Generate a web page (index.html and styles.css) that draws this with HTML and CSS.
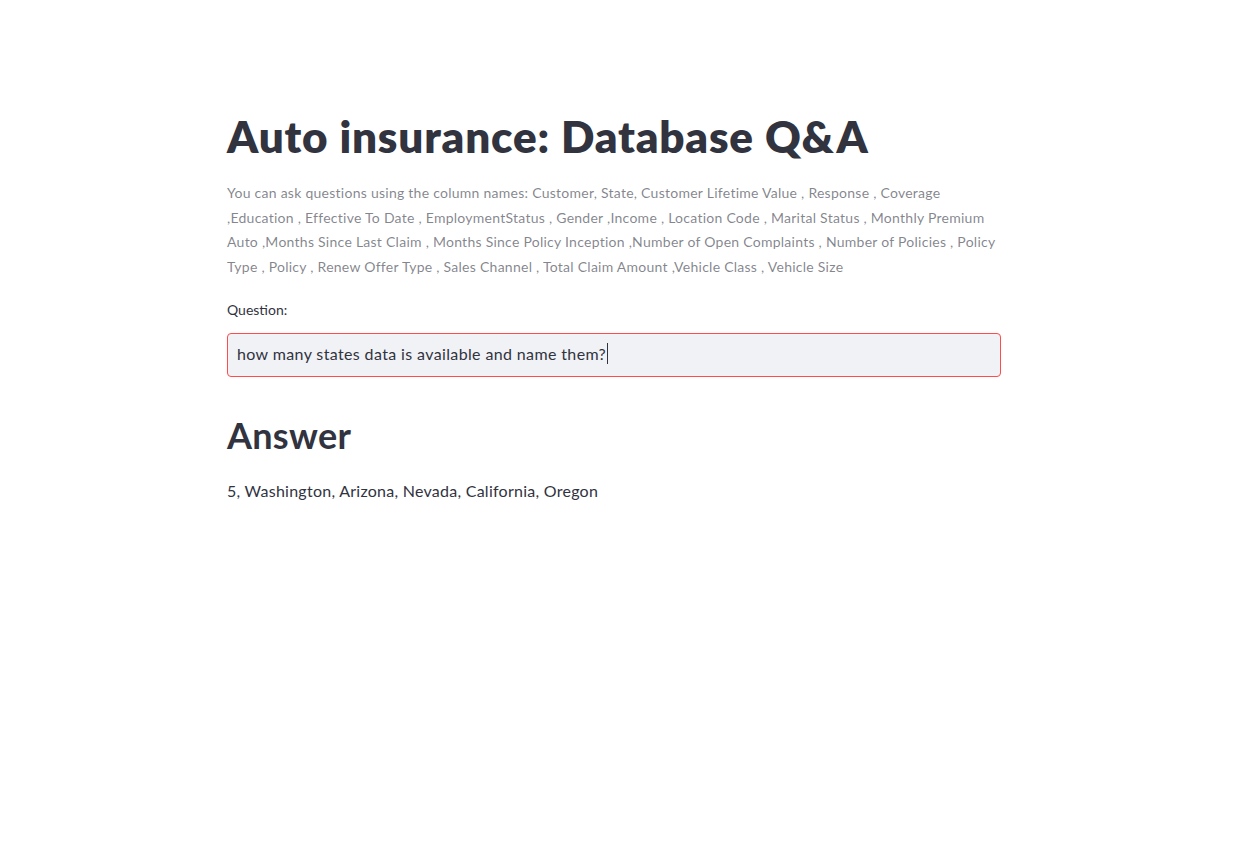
FILE: index.html
```html
<!DOCTYPE html>
<html lang="en">
<head>
<meta charset="utf-8">
<title>Auto insurance: Database Q&amp;A</title>
<link rel="stylesheet" href="styles.css">
</head>
<body>
<main class="app">
  <section class="block">
    <h1 class="title">Auto insurance: Database Q&amp;A</h1>
    <p class="caption">You can ask questions using the column names: Customer, State, Customer Lifetime Value , Response , Coverage<br>,Education , Effective To Date , EmploymentStatus , Gender ,Income , Location Code , Marital Status , Monthly Premium<br>Auto ,Months Since Last Claim , Months Since Policy Inception ,Number of Open Complaints , Number of Policies , Policy<br>Type , Policy , Renew Offer Type , Sales Channel , Total Claim Amount ,Vehicle Class , Vehicle Size</p>
    <div class="field">
      <label class="label">Question:</label>
      <div class="input"><span class="value">how many states data is available and name them?</span><span class="caret"></span></div>
    </div>
    <h2 class="subtitle">Answer</h2>
    <p class="answer">5, Washington, Arizona, Nevada, California, Oregon</p>
  </section>
</main>
</body>
</html>
```
FILE: styles.css
```css
html, body {
  margin: 0;
  padding: 0;
  background: #ffffff;
}
body {
  font-family: "Lato", "Open Sans", "Liberation Sans", sans-serif;
  color: rgb(49, 51, 63);
}
.app {
  display: flex;
  padding: 100px 0 0 227px;
}
.block {
  width: 774px;
  display: flex;
  flex-direction: column;
}
.title {
  margin: 0;
  font-size: 44px;
  font-weight: 800;
  line-height: 72px;
  letter-spacing: 0.82px;
}
.caption {
  margin: 9px 0 0;
  font-size: 14px;
  line-height: 24.6px;
  letter-spacing: 0.26px;
  color: rgba(49, 51, 63, 0.6);
}
.field {
  margin-top: 21px;
  display: flex;
  flex-direction: column;
}
.label {
  font-size: 14px;
  line-height: 20px;
  margin-bottom: 13px;
}
.input {
  display: flex;
  align-items: center;
  box-sizing: border-box;
  height: 44px;
  padding: 0 9px 4px;
  background: rgb(240, 242, 246);
  border: 1px solid rgb(255, 75, 75);
  border-radius: 4px;
  font-size: 16px;
  letter-spacing: 0.37px;
}
.caret {
  width: 1px;
  height: 21px;
  background: rgb(49, 51, 63);
  margin-left: 1px;
}
.subtitle {
  margin: 34px 0 0;
  font-size: 36px;
  font-weight: 700;
  line-height: 48px;
  letter-spacing: 0.3px;
}
.answer {
  margin: 20px 0 0;
  font-size: 16px;
  line-height: 24px;
  letter-spacing: 0.26px;
}
```
